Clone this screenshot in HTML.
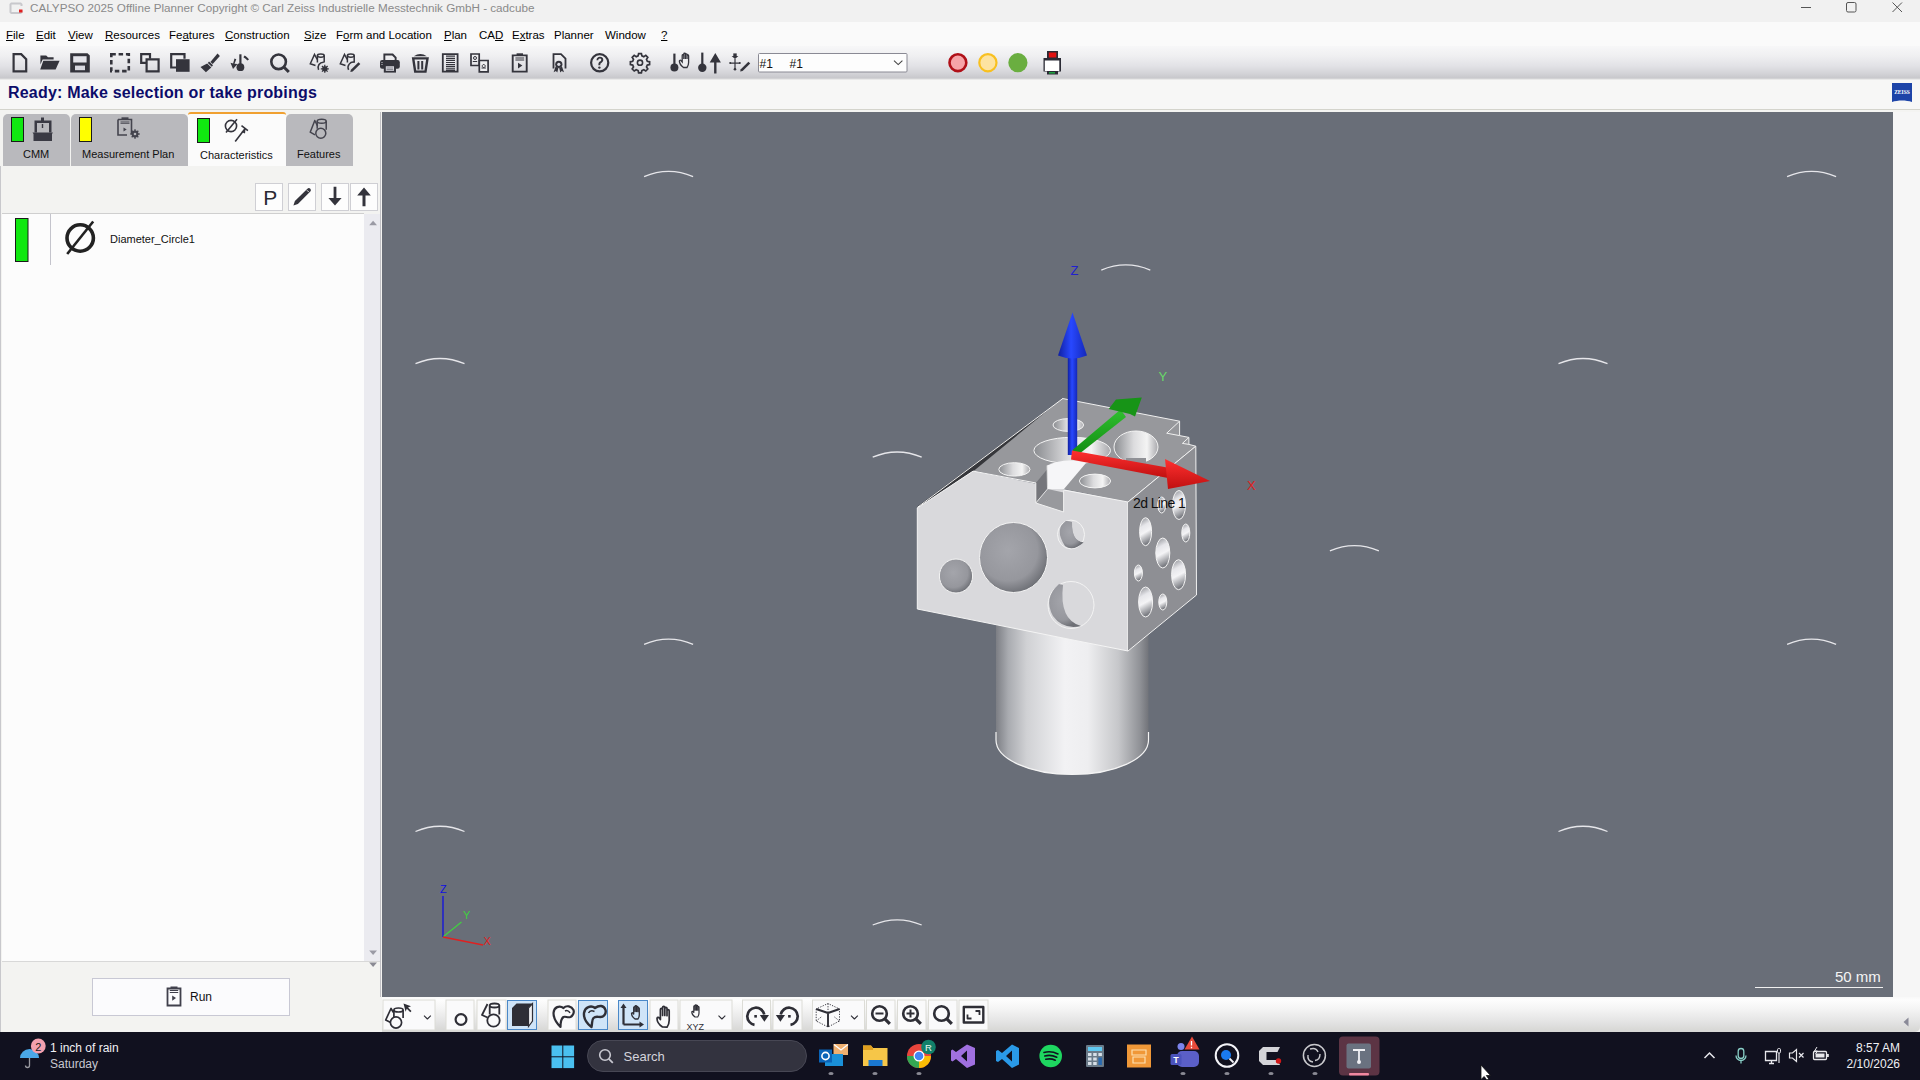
<!DOCTYPE html>
<html><head><meta charset="utf-8">
<style>
*{margin:0;padding:0;box-sizing:border-box}
html,body{width:1920px;height:1080px;overflow:hidden;background:#f4f4f2;font-family:"Liberation Sans",sans-serif}
.a{position:absolute}
.t{position:absolute;white-space:nowrap;line-height:1}
#title{left:0;top:0;width:1920px;height:22px;background:#f1f1f1}
#menu{left:0;top:22px;width:1920px;height:24px;background:#fafafa}
#tool{left:0;top:46px;width:1920px;height:34px;background:linear-gradient(#f7f7f8 0px,#efeff1 10px,#e2e2e6 20px,#d4d4d8 27px,#c8c8cc 32px,#dcdcdc 33px,#f6f6f6 34px)}
#status{left:0;top:80px;width:1920px;height:30px;background:#f7f7f6;border-bottom:1px solid #d4d4cc}
.mi{font-size:11.5px;color:#000;top:30px}
.mi u{text-decoration:underline;text-underline-offset:1px}
#left{left:0;top:110px;width:381px;height:922px;background:#f2f2f2}
#vp{left:382px;top:112px;width:1511px;height:885px;background:#6a6e75;overflow:hidden}
#right{left:1893px;top:110px;width:27px;height:922px;background:#f6f6f6}
#vtool{left:382px;top:997px;width:1538px;height:35px;background:#eeeeee}
#task{left:0;top:1032px;width:1920px;height:48px;background:#17172a}
.tab{position:absolute;top:114px;height:52px;background:#b9b9bd;border-radius:5px 5px 0 0}
.tl{font-size:11px;color:#111;top:149px}
.ico{position:absolute}
</style></head><body>
<div id="title" class="a"></div>
<div class="t" style="left:30px;top:2px;font-size:11.7px;color:#8a8a8a">CALYPSO 2025 Offline Planner Copyright © Carl Zeiss Industrielle Messtechnik GmbH - cadcube</div>

<div id="menu" class="a"></div>
<div class="t mi" style="left:6px"><u>F</u>ile</div>
<div class="t mi" style="left:36px"><u>E</u>dit</div>
<div class="t mi" style="left:68px"><u>V</u>iew</div>
<div class="t mi" style="left:105px"><u>R</u>esources</div>
<div class="t mi" style="left:169px">Fe<u>a</u>tures</div>
<div class="t mi" style="left:225px"><u>C</u>onstruction</div>
<div class="t mi" style="left:304px"><u>S</u>ize</div>
<div class="t mi" style="left:336px">F<u>o</u>rm and Location</div>
<div class="t mi" style="left:444px"><u>P</u>lan</div>
<div class="t mi" style="left:479px">CA<u>D</u></div>
<div class="t mi" style="left:512px">E<u>x</u>tras</div>
<div class="t mi" style="left:554px">Planner</div>
<div class="t mi" style="left:605px">Window</div>
<div class="t mi" style="left:661px"><u>?</u></div>

<div id="tool" class="a"></div>
<svg class="a" style="left:0;top:0" width="1100" height="82" viewBox="0 0 1100 82">
<g fill="none" stroke="#34343c" stroke-width="2.2" stroke-linejoin="miter">
<!-- 1 new doc -->
<path d="M13.6 54.1h7.6l5 5v12.3h-12.6z"/>
<!-- 3 save -->

<!-- 4 dashed -->
<path d="M111.3 54.3h17.5v16.8h-17.5z" stroke-width="2.6" stroke-dasharray="4.5 2.8"/>
<!-- 5 copy -->
<path d="M146 62.8h-4.8v-8.6h8.8v4.5" stroke-width="2.2"/>
<path d="M146.6 59.4h12v12h-12z" stroke-width="2.2"/>
<!-- 6 copy filled -->
<path d="M176 67.5h-4.8v-13.3h13.3v4.5" stroke-width="2.2"/>
<!-- 9 search -->
<circle cx="278.6" cy="61.8" r="7.3" stroke-width="2.6"/>
<path d="M283.8 67l5 5" stroke-width="3"/>
<!-- 10 features gear -->
<g stroke-width="1.5">
<path d="M317.2 59.5l-2.7-5l-4.2 9.2l5.2 1.8"/>
<ellipse cx="320.8" cy="55.6" rx="3.4" ry="1.6"/>
<path d="M317.4 55.6v7M324.2 55.6v7"/>
<path d="M318.6 69.8a5.3 5.3 0 0 1 5.2-7.6"/>
</g>
<g stroke-width="1.5">
<path d="M347.2 59.5l-2.7-5l-4.2 9.2l5.2 1.8"/>
<ellipse cx="350.8" cy="55.6" rx="3.4" ry="1.6"/>
<path d="M347.4 55.6v7M354.2 55.6v7"/>
<path d="M348.6 69.8a5.3 5.3 0 0 1 6-7.5"/>
</g>
<!-- 12 printer outline parts -->
<!-- 13 trash -->
<path d="M413.2 58.4h14.3l-2 13.2h-10.3z" stroke-width="2.4"/>
<path d="M418.4 61v8.6M422.2 61v8.6" stroke-width="2"/>
<!-- 14 doc lines -->
<path d="M442.8 54.2h14.8v17.5h-14.8z" stroke-width="1.8"/>
<!-- 15 two docs -->
<path d="M471 54h8.2v11.5h-8.2z" stroke-width="1.7"/>
<path d="M479.3 60.5h8.8v11.4h-8.8z" stroke-width="1.7" fill="#eeeef0"/><circle cx="475" cy="58" r="1.5" stroke-width="1"/><path d="M472.8 61.5h4.4M483.7 64.5a1.5 1.5 0 1 0 .01 0M481.5 68h4.4" stroke-width="1"/>
<!-- 16 clipboard -->
<path d="M512.7 55.4h14v16.2h-14z" stroke-width="1.9"/>
<!-- 17 certificate -->
<path d="M553.5 68.5v-14.3h7.5l4.5 4.5v9.8" stroke-width="1.8"/>
<!-- 18 help -->
<circle cx="599.7" cy="62.8" r="8.6" stroke-width="2.2"/>
<!-- 19 gear -->
<circle cx="640" cy="62.7" r="2.6" stroke-width="1.6"/><path d="M638.6 53.6h2.8l.5 2.3l1.9.8l2-1.3l2 2l-1.3 2l.8 1.9l2.3.5v2.8l-2.3.5l-.8 1.9l1.3 2l-2 2l-2-1.3l-1.9.8l-.5 2.3h-2.8l-.5-2.3l-1.9-.8l-2 1.3l-2-2l1.3-2l-.8-1.9l-2.3-.5v-2.8l2.3-.5l.8-1.9l-1.3-2l2-2l2 1.3l1.9-.8z" stroke-width="1.7"/>
<!-- 20 hand outline -->
<path transform="translate(1,-3)" d="M682.5 70.5c-2.2-1.6-4-4.2-4.1-6.4c0-.9 1-1.2 1.6-.5l1.2 1.4v-6.5c0-1.1 1.6-1.1 1.6 0v3.5v-5c0-1.1 1.6-1.1 1.6 0v5v-4.4c0-1.1 1.6-1.1 1.6 0v4.4v-3.2c0-1.1 1.6-1.1 1.6 0v6.8c0 2.1-.6 3.6-1.6 4.9z" stroke-width="1.3" fill="#eeeef0"/>
</g>
<g fill="#34343c" stroke="none">
<!-- 2 open folder -->
<path d="M40.4 55.6h5.8l1.8 1.6h5.6v2.4h-11l-2.2 5z"/>
<path d="M43.3 60.8h16.3l-4 8.6h-15.4z"/>
<!-- 3 save inner -->
<path d="M70.2 53.2h17.3l2.3 2.3v17h-19.6z"/>
<!-- 6 filled square -->
<path d="M176 59.2h13.6v12.6h-13.6z"/>
<!-- 7 brush -->
<path d="M217.5 53.6l2.4 2.3l-7.2 8.2l-2.3-2.2z"/>
<path d="M209 61.5l4 3.8l-1.2 1.4l-4-3.8z"/>
<path d="M207.2 63.6l4.1 3.9l-5.4 4.8l-5.4-5.2z"/>
<!-- 8 probe arrow -->
<path d="M239.3 54.3h2.2v10.5h-2.2z"/>
<circle cx="240.4" cy="67.2" r="3.9"/>
<path d="M234.5 58.5l1.8 0.8l-1.8 4.5l3 .3l-4.5 4.9l-2.5-6.3l2.6.8z"/>
<path d="M243.4 57.2l1.2-1.8c1.7.9 3.2 2.3 4.4 4l-1.6 1.2c-1.1-1.4-2.4-2.6-4-3.4z"/>
<!-- 10 gear small -->
<circle cx="324.8" cy="68.8" r="2.6"/><path d="M324.8 64.8v8M320.8 68.8h8M322 66l5.6 5.6M327.6 66l-5.6 5.6" stroke="#34343c" stroke-width="1.3"/>
<!-- 11 pencil -->
<path d="M358.5 62.3l1.8 1.8l-7.6 7.3l-2.4.6l.6-2.3z"/>
<!-- 12 printer -->
<path d="M413.8 56.3q6.5-4.6 13 0z"/>
<path d="M383.4 53.6h9.6l3.6 3.6v3.6h-1.9v-2.8l-2.6-2.6h-6.8v5.4h-1.9z"/>
<rect x="380" y="60" width="19.8" height="8.8" rx="2.2"/>
<path d="M383.8 64.6h12.2v8h-12.2z"/>
<!-- 14 doc lines -->
<path d="M446 55.6h9v1.2h-9zM446 57.7h9v1.2h-9zM446 59.8h9v1.2h-9zM446 61.9h9v1.2h-9zM446 64h9v1.2h-9zM446 66.1h9v1.2h-9zM446 68.2h9v1.2h-9zM446 70.1h9v.9h-9z"/>
<!-- 16 clipboard play -->
<path d="M516.6 53.3h6.4v2.4h-6.4z"/>
<path d="M515.4 57.4h8.8v1.2h-8.8zM515.4 59.4h8.8v1.2h-8.8z"/>
<path d="M518 62.8l4.4 2.8l-4.4 2.8z"/>
<!-- 17 certificate seal -->
<circle cx="558.8" cy="64.3" r="3.6"/>
<path d="M555.6 66.5l-2 5.7l2.3-1.3l1.4 1.7l1.1-4.6zM562 66.5l2 5.7l-2.3-1.3l-1.4 1.7l-1.1-4.6z"/>
<!-- 18 help ? -->
<path d="M596.5 60.3c0-2.3 1.5-3.5 3.4-3.5c2 0 3.4 1.3 3.4 3c0 1.5-.8 2.3-2 3.1c-.8.5-1 .9-1 1.8v.6h-1.9v-.8c0-1.4.4-2.1 1.5-2.9c.9-.6 1.4-1 1.4-1.8c0-.8-.6-1.4-1.5-1.4c-1 0-1.5.7-1.5 1.9z"/>
<circle cx="599.4" cy="67.6" r="1.2"/>
<!-- 20 probe -->
<path d="M673.3 53.6h2.2v11.5h-2.2z"/>
<circle cx="674.4" cy="67.6" r="4"/>
<!-- 21 probe + up arrow -->
<path d="M701.2 52.6h2.2v12.5h-2.2z"/>
<circle cx="702.3" cy="67.8" r="4.2"/>
<path d="M715.3 53l5.6 9.4h-4.4v11.2h-2.4v-11.2h-4.4z"/>
<!-- 22 tree + pencil -->
<path d="M733.3 53.4h3.4v2.6h-3.4z"/><path d="M731.6 56h6.8l-3.4 3z"/>
<path d="M734.4 59h1.2v10.2h-1.2zM730 62.6h10v1.1h-10z"/>
<circle cx="735" cy="69.2" r="1.3"/><circle cx="730.2" cy="63.1" r="1"/><circle cx="739.8" cy="63.1" r="1"/>
<path d="M748.4 61.8l1.8 1.8l-7.6 7.4l-2.5.6l.7-2.4z"/>
</g>
<!-- save windows light -->
<path d="M73.2 56.2h13.4v6.3h-13.4z" fill="#e4e4ea"/>
<path d="M75 65.6h10v4.6h-10z" fill="#d8d8e0"/>
<!-- printer inner lines -->
<path d="M385.8 66.3h8.2v4.5h-8.2z" fill="#e2e2e8"/><path d="M386.5 68h6.8M386.5 69.6h6.8" stroke="#6a6a74" stroke-width="0.8"/><path d="M381.2 62.5h1.6M381.2 64.5h1.6" stroke="#b0b0b8" stroke-width="0.8"/>
<!-- certificate inner -->
<circle cx="558.8" cy="64.3" r="1.6" fill="#dedee6"/>
<!-- combo -->
<rect x="758.5" y="53.5" width="148.5" height="18.5" rx="1" fill="#fdfdfd" stroke="#8a8a94" stroke-width="1"/>
<text x="759.5" y="67.6" font-family="Liberation Sans" font-size="12" fill="#111">#1</text>
<text x="789.5" y="67.6" font-family="Liberation Sans" font-size="12" fill="#111">#1</text>
<path d="M894 60.6l4.2 4l4.2-4" fill="none" stroke="#444" stroke-width="1.1"/>
<!-- traffic lights -->
<circle cx="957.9" cy="62.7" r="8.4" fill="#f6a4a8" stroke="#b01018" stroke-width="2.6"/>
<circle cx="987.9" cy="62.7" r="8.6" fill="#fde3a0" stroke="#f8c020" stroke-width="2.2"/>
<circle cx="1017.9" cy="62.7" r="9.6" fill="#6aae40"/>
<!-- device -->
<path d="M1047 51h11v7h3v13.5h-3v3h-11v-3h-3.5v-13.5h3.5z" fill="#2a2a34"/>
<path d="M1048.8 52.5h7.5v5h-7.5z" fill="#e01010"/>
<path d="M1044.8 60.5h14.5v10.5h-14.5z" fill="#ffffff"/>
<path d="M1049 72h6v1.6h-6z" fill="#20a040"/>
</svg>

<!-- window controls -->
<svg class="a" style="left:1780px;top:0" width="140" height="22" viewBox="1780 0 140 22">
<path d="M1801 7.5h10" stroke="#555" stroke-width="1"/>
<rect x="1846.5" y="2.5" width="9.5" height="9.5" rx="1.5" fill="none" stroke="#555" stroke-width="1"/>
<path d="M1892.5 2.5l9.5 9.5M1902 2.5l-9.5 9.5" stroke="#555" stroke-width="1"/>
</svg>
<!-- title icon -->
<svg class="a" style="left:6px;top:1px" width="20" height="16" viewBox="6 1 20 16">
<path d="M11 2.5h10l1.5 1.5v2h-2v-1.5h-9v7.5h9v-1.5h2v2l-1.5 1.5h-10l-1.5-1.5v-8.5z" fill="#c8c8cc"/>
<path d="M19 9.5h3.5v3h-3.5z" fill="#e02020"/>
</svg>


<div id="status" class="a"></div>
<!-- zeiss logo -->
<svg class="a" style="left:1890px;top:82px" width="24" height="24" viewBox="1890 82 24 24">
<path d="M1892 83h20v19c-6-2-14-2-20 0z" fill="#1d44a8"/>
<text x="1902" y="93.5" font-family="Liberation Serif" font-size="5.5" font-weight="bold" fill="#fff" text-anchor="middle">ZEISS</text>
</svg>
<div class="t" style="left:8px;top:85px;font-size:16px;font-weight:bold;color:#0c0c6a;letter-spacing:0.2px">Ready: Make selection or take probings</div>

<div class="a" style="left:0;top:110px;width:382px;height:922px;background:#f3f3f1"></div>
<div class="a" style="left:0;top:166px;width:1px;height:866px;background:#c8c8cc"></div>
<div class="a" style="left:380px;top:112px;width:1px;height:885px;background:#c0c0c4"></div>
<div class="tab" style="left:3px;width:67px"></div>
<div class="tab" style="left:71px;width:117px"></div>
<div class="a" style="left:188px;top:112px;width:98px;height:54px;background:#fbfbfb;border-radius:3px 3px 0 0;border-top:2.5px solid #f0a030"></div>
<div class="tab" style="left:286px;width:67px"></div>
<div class="a" style="left:2px;top:213px;width:362px;height:748px;background:#fcfcfc;border-top:1px solid #cfcfcf"></div>
<div class="a" style="left:364px;top:214px;width:16px;height:747px;background:#ebebf0"></div>
<div class="a" style="left:2px;top:961px;width:378px;height:1px;background:#d8d8d8"></div>
<div class="t tl" style="left:23px">CMM</div>
<div class="t tl" style="left:82px">Measurement Plan</div>
<div class="t tl" style="left:200px;top:150px">Characteristics</div>
<div class="t tl" style="left:297px">Features</div>
<div class="t" style="left:110px;top:234px;font-size:11px;color:#111">Diameter_Circle1</div>
<svg class="a" style="left:0;top:110px" width="382" height="922" viewBox="0 110 382 922">
<rect x="11.5" y="117.5" width="12" height="24" fill="#10e810" stroke="#1a1a1a" stroke-width="1"/>
<rect x="79.5" y="117.5" width="12" height="24" fill="#ffff00" stroke="#1a1a1a" stroke-width="1"/>
<rect x="197.5" y="118.5" width="12" height="24" fill="#10e810" stroke="#1a1a1a" stroke-width="1"/>
<rect x="15.5" y="218.5" width="12.5" height="43" fill="#10e810" stroke="#1a1a1a" stroke-width="1"/>
<path d="M50.5 214v51" stroke="#c4c4cc" stroke-width="1"/>
<!-- CMM icon -->
<g fill="#3a3a44">
<path d="M41 117.5h3v4h-3z"/>
<path d="M34.5 120.5h17v12h-2.5v-9.5h-12v9.5h-2.5z"/>
<path d="M41.8 124h1.4v4h-1.4z"/>
<path d="M32.5 132.5h20.5l-1 1.5v7h-18.5v-7z"/>
</g>
<!-- MP icon: clipboard + gear -->
<g fill="none" stroke="#44444e" stroke-width="1.6">
<path d="M118 119.5h13.5v14.5M118 119.5v15.5h9"/>
</g>
<g fill="#44444e">
<path d="M121.5 117.3h7v1.8h-7z"/>
<path d="M120.5 121.5h9v.9h-9zM120.5 123.2h9v.9h-9z"/>
<path d="M123.5 127.5l3.2 2l-3.2 2z"/>
<circle cx="135" cy="134" r="3.4"/>
<path d="M135 129.3v9.4M130.3 134h9.4M131.7 130.7l6.6 6.6M138.3 130.7l-6.6 6.6" stroke="#44444e" stroke-width="1.4"/>
</g>
<circle cx="135" cy="134" r="1.3" fill="#b9b9bd"/>
<!-- Characteristics icon -->
<g fill="none" stroke="#34343c" stroke-width="1.6">
<circle cx="231" cy="126" r="5.6"/>
<path d="M226 132.5l11-13.2"/>
<path d="M235.2 141.4l9.6-12.5M241.5 125.6l6.4 5"/>
</g>
<path d="M241.5 132l4-3.3l-.5 4.8z" fill="#34343c"/>
<!-- Features icon (tab) -->
<g fill="none" stroke="#44444e" stroke-width="1.5">
<path d="M317.5 126L314.8 120.5L310.2 132.2L315 134.8" stroke-linejoin="round"/>
<ellipse cx="321.7" cy="121.2" rx="4.5" ry="2"/>
<path d="M317.2 121.2v7.5M326.2 121.2v8.5"/>
<circle cx="320.8" cy="133.2" r="5"/>
</g>
<!-- buttons -->
<g fill="#fdfdfd" stroke="#cfcfd4" stroke-width="1">
<rect x="255.5" y="183.5" width="27" height="27"/>
<rect x="288.5" y="183.5" width="27" height="27"/>
<rect x="321.5" y="183.5" width="27" height="27"/>
<rect x="350.5" y="183.5" width="27" height="27"/>
</g>
<text x="263.2" y="205" font-family="Liberation Sans" font-size="21" fill="#2a2a34">P</text>
<path d="M293.4 205.6l1.5-4.6l12.5-12.3c.8-.8 2.1-.8 2.9 0c.8.8.8 2.1 0 2.9l-12.4 12.5z" fill="#34343c"/>
<path d="M307 190.3l1.6 1.6" stroke="#fdfdfd" stroke-width="1"/>
<path d="M333.6 186.8h2.8v11.2h5.2l-6.6 7.6l-6.6-7.6h5.2z" fill="#34343c"/>
<path d="M364 187.5l6.8 8h-5.3v10.8h-3v-10.8h-5.3z" fill="#34343c"/>
<!-- ⌀ -->
<circle cx="80.2" cy="238" r="13.2" fill="none" stroke="#222" stroke-width="3.6"/>
<path d="M67.2 254l26-32.5" stroke="#222" stroke-width="2.6"/>
<!-- scroll arrows -->
<path d="M369.2 225.3l3.9-4.6l3.9 4.6z" fill="#9a9aa4"/>
<path d="M369.2 950.5l3.9 4.6l3.9-4.6z" fill="#9a9aa4"/>
<path d="M369.2 962.5l3.9 4.6l3.9-4.6z" fill="#8a8a94"/>
<!-- run button -->
<rect x="92.5" y="978.5" width="197" height="37" fill="#fbfbfd" stroke="#c8c8d4" stroke-width="1"/>
<path d="M167.5 988.5h13v17h-13z" fill="none" stroke="#40404c" stroke-width="1.8"/>
<path d="M170.5 986.6h7v1.8h-7zM169.8 990h8.4v1h-8.4zM169.8 992h8.4v1h-8.4z" fill="#40404c"/>
<path d="M172.2 995.5l3.8 2.6l-3.8 2.6z" fill="#40404c"/>
</svg>
<div class="t" style="left:190px;top:991px;font-size:12px;color:#111">Run</div>

<svg class="a" style="left:382px;top:112px" width="1511" height="885" viewBox="382 112 1511 885">
<defs>
<linearGradient id="cyl" x1="996" x2="1149" y1="0" y2="0" gradientUnits="userSpaceOnUse">
<stop offset="0" stop-color="#7c7e84"/>
<stop offset="0.08" stop-color="#a9abb0"/>
<stop offset="0.2" stop-color="#d0d1d4"/>
<stop offset="0.45" stop-color="#f2f2f4"/>
<stop offset="0.6" stop-color="#eeeef0"/>
<stop offset="0.8" stop-color="#c6c7ca"/>
<stop offset="0.94" stop-color="#909297"/>
<stop offset="1" stop-color="#707278"/>
</linearGradient>
<linearGradient id="hole" x1="0" x2="1" y1="0" y2="0">
<stop offset="0" stop-color="#8a8c90"/>
<stop offset="0.45" stop-color="#dcdcde"/>
<stop offset="0.75" stop-color="#f4f4f4"/>
<stop offset="1" stop-color="#a8a8ac"/>
</linearGradient>
<radialGradient id="holeF" cx="0.42" cy="0.4" r="0.62">
<stop offset="0" stop-color="#a4a5ab"/>
<stop offset="0.7" stop-color="#96979d"/>
<stop offset="1" stop-color="#6e7076"/>
</radialGradient>
<linearGradient id="holeR" x1="0" x2="0.25" y1="0" y2="1">
<stop offset="0" stop-color="#85878d"/>
<stop offset="0.35" stop-color="#e6e6ea"/>
<stop offset="0.6" stop-color="#f4f4f6"/>
<stop offset="1" stop-color="#7c7e84"/>
</linearGradient>
<linearGradient id="zax" x1="0" x2="1" y1="0" y2="0">
<stop offset="0" stop-color="#1020a0"/><stop offset="0.45" stop-color="#2848ff"/><stop offset="1" stop-color="#1428b8"/>
</linearGradient>
<linearGradient id="yax" x1="0" x2="0" y1="0" y2="1">
<stop offset="0" stop-color="#30c030"/><stop offset="1" stop-color="#108a10"/>
</linearGradient>
<linearGradient id="xax" x1="0" x2="0" y1="0" y2="1">
<stop offset="0" stop-color="#ff3030"/><stop offset="1" stop-color="#c01010"/>
</linearGradient>
</defs>
<rect x="382" y="112" width="1511" height="885" fill="#696e78"/>
<!-- faint arcs -->
<g fill="none" stroke="#e6e6ea" stroke-width="1.3">
<path d="M644.1 176.6Q668.6 166.2 693.1 176.6"/>
<path d="M1787.1 176.6Q1811.6 166.2 1836.1 176.6"/>
<path d="M1101.3 270.1Q1125.8 259.8 1150.3 270.1"/>
<path d="M415.5 363.7Q440.0 353.3 464.5 363.7"/>
<path d="M1558.5 363.7Q1583.0 353.3 1607.5 363.7"/>
<path d="M872.7 457.2Q897.2 446.8 921.7 457.2"/>
<path d="M1329.9 550.8Q1354.4 540.4 1378.9 550.8"/>
<path d="M644.1 644.4Q668.6 633.9 693.1 644.4"/>
<path d="M1787.1 644.4Q1811.6 633.9 1836.1 644.4"/>
<path d="M415.5 831.5Q440.0 821.0 464.5 831.5"/>
<path d="M1558.5 831.5Q1583.0 821.0 1607.5 831.5"/>
<path d="M872.7 925.0Q897.2 914.6 921.7 925.0"/>
</g>
<!-- cylinder -->
<path d="M996 600h152.5v140a76.2 34.5 0 0 1 -152.5 0z" fill="url(#cyl)"/>
<path d="M996 732v8a76.2 34.5 0 0 0 152.5 0v-8" fill="none" stroke="#f4f4f4" stroke-width="1.2"/>
<!-- block top face -->
<path d="M1062.5 398.5L1179.6 421.2L1179.6 435.6L1188.9 437.4L1188.9 444.4L1195.8 446.2L1128 502L976 471L917 507.5z" fill="#97989c"/>
<!-- notch at right back -->
<path d="M1179.6 421.2V435.6L1188.9 437.4V444.4L1195.8 446.2M1179.6 421.2L1166.7 433.2L1179.6 435.6M1188.9 437.4L1182.4 443.4L1188.9 444.4" fill="none" stroke="#f0f0f0" stroke-width="1"/>
<!-- chamfer dark line -->
<path d="M1063 398.4L917.3 506.5L917.3 508L973 471.5L1056 403.5z" fill="#36373b"/>
<path d="M1063 398.4L917.2 507.5" stroke="#f0f0f0" stroke-width="1"/>
<path d="M1062.5 398.5L1179.6 421.2M1195.8 446.2L1128 502" stroke="#f0f0f0" stroke-width="1"/>
<!-- front face -->
<path d="M917.3 508L973.1 471.1L1128 502L1128 651L917.3 609z" fill="#d9d9dc"/>
<path d="M917.3 609L917.3 508L973.1 471.1L1036 483M1063.5 490L1128 502L1128 651L917.3 609" fill="none" stroke="#f4f4f4" stroke-width="1"/>
<!-- right face -->
<path d="M1128 502L1195.8 446.2L1196.5 595L1128 651z" fill="#8e8f94"/>
<path d="M1128 502L1195.8 446.2L1196.5 595L1128 651" fill="none" stroke="#f0f0f0" stroke-width="1"/>
<!-- slot -->
<path d="M1035.8 483L1047.5 469L1047.5 489L1035.8 503z" fill="#75767b"/>
<path d="M1035.8 503L1047.5 489L1063.6 492.5L1063.6 512z" fill="#98999d"/>
<path d="M1035.8 483v20l27.8 9v-21.5" fill="none" stroke="#f0f0f0" stroke-width="1"/>
<path d="M1035.8 503L1047.5 489" stroke="#f0f0f0" stroke-width="0.8"/>
<!-- top holes -->
<ellipse cx="1072.2" cy="450.5" rx="38.3" ry="13.2" fill="url(#hole)" stroke="#f4f4f4" stroke-width="1"/>
<path d="M1047 465.5Q1066 457 1086 463L1064 489L1047.5 489z" fill="#f6f6f8"/>
<path d="M1047 465.5L1047.5 489" stroke="#dcdcdc" stroke-width="0.8"/>
<ellipse cx="1068.3" cy="425" rx="15.3" ry="6.4" fill="url(#hole)" stroke="#f4f4f4" stroke-width="1"/>
<ellipse cx="1014.4" cy="469.4" rx="15.6" ry="6.7" fill="url(#hole)" stroke="#f4f4f4" stroke-width="1"/>
<ellipse cx="1095" cy="481" rx="15.6" ry="6.9" fill="url(#hole)" stroke="#f4f4f4" stroke-width="1"/>
<ellipse cx="1136" cy="447" rx="22" ry="16" fill="url(#hole)" stroke="#f4f4f4" stroke-width="1"/>
<path d="M1126 458h20v12h-20z" fill="#909196"/>
<!-- front holes -->
<ellipse cx="1013.5" cy="557.5" rx="34" ry="35" fill="url(#holeF)" stroke="#f4f4f4" stroke-width="1"/>
<ellipse cx="956" cy="576" rx="16.6" ry="17" fill="url(#holeF)" stroke="#f4f4f4" stroke-width="1"/>
<ellipse cx="1071" cy="534.5" rx="13.5" ry="14.4" fill="#d9d9dc" stroke="#f4f4f4" stroke-width="1"/>
<path d="M1066 521a13.5 14.4 0 0 0 17.5 21.5q-12 -1 -11.5 -20.5z" fill="url(#holeF)"/><path d="M1066 521q-12 8 -1 25q8 6 18.5 -3.5q-12-1-11.5-20.5z" fill="url(#holeF)"/>
<ellipse cx="1071" cy="605" rx="23" ry="23.5" fill="#d9d9dc" stroke="#f4f4f4" stroke-width="1"/>
<path d="M1059 584q-16 14 -6 32q10 14 28 10q-22-6-18-41z" fill="url(#holeF)"/>
<!-- right face holes -->
<g fill="url(#holeR)" stroke="#f4f4f4" stroke-width="1">
<ellipse cx="1145.6" cy="531.7" rx="6" ry="14"/>
<ellipse cx="1185.8" cy="533" rx="4" ry="9"/>
<ellipse cx="1162.8" cy="553" rx="7" ry="15"/>
<ellipse cx="1178.6" cy="574.7" rx="7" ry="15"/>
<ellipse cx="1138.4" cy="573" rx="4" ry="8"/>
<ellipse cx="1145.6" cy="602" rx="7" ry="15"/>
<ellipse cx="1162.8" cy="602" rx="4" ry="8"/>
<ellipse cx="1179" cy="505" rx="6.5" ry="14.5"/>
<ellipse cx="1161.7" cy="505" rx="4" ry="8"/>
</g>
<!-- axes -->
<path d="M1067.8 355h9.4v100h-9.4z" fill="url(#zax)"/>
<path d="M1072.5 312.5L1058 355.5q14.5 6 29 0z" fill="url(#zax)"/>
<path d="M1072.5 450L1076.5 456L1126 417L1120.5 409.5z" fill="url(#yax)"/>
<path d="M1108.7 409L1116 399.5L1141.8 397.6L1135 416.5L1130 414z" fill="#179417"/>
<path d="M1072 450.5L1071 459.5L1168 478L1170 468z" fill="url(#xax)"/>
<path d="M1210 481L1165 459L1168 489z" fill="url(#xax)"/>
<text x="1070.5" y="275" font-family="Liberation Sans" font-size="13" fill="#2020d0">Z</text>
<text x="1158.5" y="381" font-family="Liberation Sans" font-size="13" fill="#68d868">Y</text>
<text x="1247" y="489.5" font-family="Liberation Sans" font-size="13" fill="#e02020">X</text>
<text x="1133" y="507.5" font-family="Liberation Sans" font-size="14" letter-spacing="-0.6" fill="#101010">2d Line 1</text>
<!-- mini axes -->
<path d="M443 896v41" stroke="#1010e0" stroke-width="1.3"/>
<path d="M443.5 936.5l18-14.5" stroke="#40d040" stroke-width="1.2"/>
<path d="M443 937l40 8" stroke="#e02020" stroke-width="1.3"/>
<text x="440" y="893" font-family="Liberation Sans" font-size="11" fill="#1010e0">Z</text>
<text x="463" y="919" font-family="Liberation Sans" font-size="11" fill="#40d040">Y</text>
<text x="483.5" y="945" font-family="Liberation Sans" font-size="11" fill="#e02020">X</text>
<!-- scale -->
<text x="1835" y="982" font-family="Liberation Sans" font-size="15" fill="#f4f4f4">50 mm</text>
<path d="M1755 987.5h128" stroke="#f0f0f0" stroke-width="1.2"/>
</svg>

<div class="a" style="left:382px;top:997px;width:1538px;height:35px;background:linear-gradient(#f8f8f8 0px,#fdfdfd 3px,#f4f4f4 12px,#e2e2e2 26px,#d8d8d6 33px,#d8d8d6 35px);border-radius:0 0 5px 0"></div>
<div class="a" style="left:1893px;top:112px;width:27px;height:885px;background:#f6f6f6"></div>

<svg class="a" style="left:382px;top:997px" width="640" height="35" viewBox="382 997 640 35">
<g fill="#fafafb" stroke="#dcdcd6" stroke-width="1">
<rect x="383" y="1000" width="52" height="30"/>
<rect x="446" y="1000" width="28" height="30"/>
<rect x="477" y="1000" width="29" height="30"/>
<rect x="548" y="1000" width="28" height="30"/>
<rect x="650" y="1000" width="28" height="30"/>
<rect x="680" y="1000" width="52" height="30"/>
<rect x="742.5" y="1000" width="28" height="30"/>
<rect x="773" y="1000" width="29" height="30"/>
<rect x="812.5" y="1000" width="52" height="30"/>
<rect x="866.5" y="1000" width="28.5" height="30"/>
<rect x="897.5" y="1000" width="28.5" height="30"/>
<rect x="928.5" y="1000" width="28.5" height="30"/>
<rect x="959" y="1000" width="29" height="30"/>
</g>
<g fill="#cfe4f8" stroke="#4a88c8" stroke-width="1">
<rect x="507.5" y="1000.5" width="29" height="29"/>
<rect x="578.5" y="1000.5" width="29" height="29"/>
<rect x="618.5" y="1000.5" width="29" height="29"/>
</g>
<g fill="none" stroke="#2e2e36" stroke-width="1.5" stroke-linejoin="round">
<!-- b1 shapes + cursor -->
<path d="M393.5 1012.5l-2.5-4l-5.3 11.5l5 2.5" stroke-width="1.7"/>
<ellipse cx="398.5" cy="1010" rx="4.6" ry="2" stroke-width="1.7"/>
<path d="M393.9 1010v7M403.1 1010v8" stroke-width="1.7"/>
<circle cx="396" cy="1022.5" r="5.6" stroke-width="1.7"/>
<path d="M424 1015.6l3.4 3.4l3.4-3.4" stroke-width="1.1"/>
<!-- b2 circle -->
<circle cx="461" cy="1019.5" r="5.4" stroke-width="2.2"/>
<!-- b3 shapes -->
<path d="M487.5 1004l-5.5 11l5.5 2.5" stroke-width="1.8"/>
<ellipse cx="494.5" cy="1005.5" rx="4.8" ry="2" stroke-width="1.8"/>
<path d="M489.7 1005.5v9M499.3 1005.5v9" stroke-width="1.8"/>
<circle cx="493.5" cy="1020.5" r="6.2" stroke-width="1.8"/>
<!-- b5 blob -->
<path d="M553.5 1013c.5-6 6-8 10-5c3-3 8-2 10 2c1 3-1 6-3 7c-3 1-5-1-7 0c-3 2-3 6-3 10c-3-3-7-8-7-14z" stroke-width="2.2"/>
<path d="M565 1011c2-1 4 0 5 2" stroke-width="1.5"/>
<!-- b6 blob outline -->
<path d="M584 1013c1-6 7-8 11-5c4-3 9-3 10.5 2c1 4-2 7-5 7c-3 0-5-1-7 1c-2 2-1 5-2 9c-4-3-8-8-7.5-14z" stroke-width="2.4"/>
<path d="M588.5 1013c1-2 3-3 6-1.5" stroke-width="1.4"/>
<!-- b7 axes + hand -->
<path d="M623.5 1024.5v-18M623.5 1024.5h17" stroke-width="2.2"/>
<!-- b8 hand -->
<path d="M662.5 1027c-3-2-5.5-5.5-5.5-8.5c0-1.2 1.4-1.6 2.2-.6l1.2 1.6v-10c0-1.4 2.2-1.4 2.2 0v6v-8c0-1.4 2.2-1.4 2.2 0v8v-7c0-1.4 2.2-1.4 2.2 0v7.2v-5c0-1.4 2.2-1.4 2.2 0v9.5c0 3-.8 5-2.2 7z" stroke-width="1.7"/>
<!-- b7 small hand -->
<path d="M635 1019c-2-1.5-3.5-3.5-3.5-5.5c0-.8.9-1 1.4-.4l.8 1v-6.5c0-.9 1.4-.9 1.4 0v4v-5.2c0-.9 1.4-.9 1.4 0v5.2v-4.5c0-.9 1.4-.9 1.4 0v4.6v-3.2c0-.9 1.4-.9 1.4 0v6.2c0 2-.5 3.2-1.4 4.3z" stroke-width="1.3"/>
<!-- b9 xyz hand -->
<path d="M695 1017c-2-1.3-3.2-3.2-3.2-5c0-.7.8-.9 1.3-.4l.7.9v-6c0-.8 1.3-.8 1.3 0v3.7v-4.8c0-.8 1.3-.8 1.3 0v4.8v-4.2c0-.8 1.3-.8 1.3 0v4.2v-3c0-.8 1.3-.8 1.3 0v5.8c0 1.8-.5 3-1.3 4z" stroke-width="1.2"/>
<path d="M718.5 1015.6l3.4 3.4l3.4-3.4" stroke-width="1.1"/>
<!-- b10 rotate cw -->
<path d="M754.5 1024.8A8.6 8.6 0 1 1 764.3 1014.5" stroke-width="2.7"/>
<!-- b11 rotate ccw -->
<path d="M790.5 1024.8A8.6 8.6 0 1 0 780.7 1014.5" stroke-width="2.7"/>
<!-- b12 cube -->
<path d="M828 1013v14M828 1013l-11.8-4M828 1013l11.5-4" stroke-width="1.9"/>
<path d="M816.2 1009v12l11.8 6l11.5-6v-12l-11.5-5.5z M828 1003.5v9.5M816.2 1021l5-4M839.5 1021l-5-4" stroke-width="0.9" stroke-dasharray="1.3 1.3"/>
<path d="M851 1015.6l3.4 3.4l3.4-3.4" stroke-width="1.1"/>
<!-- zoom out/in/zoom -->
<circle cx="879.5" cy="1013.5" r="7.3" stroke-width="2.6"/><path d="M884.8 1018.8l5 5" stroke-width="3.2"/><path d="M875.5 1013.5h8" stroke-width="2"/>
<circle cx="910.5" cy="1013.5" r="7.3" stroke-width="2.6"/><path d="M915.8 1018.8l5 5" stroke-width="3.2"/><path d="M906.5 1013.5h8M910.5 1009.5v8" stroke-width="2"/>
<circle cx="941.5" cy="1013.5" r="7.3" stroke-width="2.6"/><path d="M946.8 1018.8l5 5" stroke-width="3.2"/>
<!-- fit -->
<rect x="963.8" y="1007" width="19.5" height="15.5" stroke-width="2.4"/>
<path d="M967.5 1014.5v4h4M979.5 1015v-4h-4" stroke-width="1.8"/>
</g>
<g fill="#2e2e36">
<path d="M403.5 1003.5l7.5 2.8l-3 1.2l3.5 3.5l-1.2 1.2l-3.5-3.5l-1.2 3z"/>
<path d="M528.5 1005l4 -2.5v17.5l-4 4.5z" fill="#f4f4f6"/>
<path d="M512 1008l4.5-4.5h16l-4.5 4.5zM512 1008h16.5v18h-16.5z"/>
<path d="M528.5 1008l4-4.5v17.5l-4 5.5z" fill="#f0f0f2" stroke="#2e2e36" stroke-width="1.2"/>
<path d="M623.5 1003.5l3 4.5h-6z"/><path d="M644 1024.5l-4.5 3v-6z"/>
<path d="M759.8 1015h9.2l-4.6 6.8z"/><rect x="754.3" y="1015" width="2.6" height="2.6"/>
<path d="M775.8 1015h9.2l-4.6 6.8z"/><rect x="788.1" y="1015" width="2.6" height="2.6"/>
</g>
<text x="686.5" y="1029.5" font-family="Liberation Sans" font-size="9" fill="#2e2e36">XYZ</text>
</svg>
<svg class="a" style="left:1895px;top:1010px" width="20" height="20" viewBox="1895 1010 20 20">
<path d="M1908.5 1017.5v9l-5-4.5z" fill="#8a8a98"/>
</svg>

<div class="a" style="left:0;top:1032px;width:1920px;height:48px;background:#11111f"></div>
<svg class="a" style="left:0;top:1032px" width="1920" height="48" viewBox="0 1032 1920 48">
<!-- weather umbrella -->
<path d="M20 1058a9.5 9 0 0 1 19 0z" fill="#4aa8e8"/>
<path d="M29.5 1058v7.5a2 2 0 0 1-4 0" fill="none" stroke="#9a9aa0" stroke-width="1.3"/>
<circle cx="38.3" cy="1046" r="7.4" fill="#f4a0ae"/>
<text x="38.3" y="1050.5" font-family="Liberation Sans" font-size="11" fill="#1a1a1a" text-anchor="middle">2</text>
<!-- windows logo -->
<g fill="#4ac0f0">
<rect x="551.5" y="1045.5" width="10.8" height="10.8"/>
<rect x="563.3" y="1045.5" width="10.8" height="10.8"/>
<rect x="551.5" y="1057.3" width="10.8" height="10.8"/>
<rect x="563.3" y="1057.3" width="10.8" height="10.8"/>
</g>
<!-- search pill -->
<rect x="587.5" y="1040.5" width="219" height="31" rx="15.5" fill="#33333f" stroke="#474754" stroke-width="1"/>
<circle cx="605" cy="1055" r="5.3" fill="none" stroke="#c8c8d0" stroke-width="1.6"/>
<path d="M608.8 1058.8l4 4" stroke="#c8c8d0" stroke-width="1.8"/>
<text x="623.5" y="1060.5" font-family="Liberation Sans" font-size="13" fill="#d4d4dc">Search</text>
<!-- outlook -->
<rect x="833.5" y="1044" width="14.5" height="11" fill="#f0b070"/>
<path d="M834 1044.5l7 5.5l7-5.5" fill="none" stroke="#fff" stroke-width="1.3"/>
<rect x="825" y="1054" width="18" height="12" fill="#1a90d8"/>
<rect x="819" y="1049.5" width="13" height="13" fill="#0a64b8"/>
<circle cx="825.5" cy="1056" r="3.6" fill="none" stroke="#fff" stroke-width="1.6"/>
<!-- folder -->
<path d="M863 1045.5h8l2 2.5h14.5v18h-24.5z" fill="#f6c648"/>
<path d="M863 1045.5h8l2 2.5v2h-10z" fill="#e0a020"/>
<rect x="868.5" y="1060" width="14" height="6" fill="#1a78d0"/>
<!-- chrome -->
<circle cx="919" cy="1056" r="12" fill="#e8453c"/>
<path d="M919 1056l-10.4 6l-1.6-6a12 12 0 0 0 12 12z" fill="#34a853"/>
<path d="M907 1056a12 12 0 0 0 6 10.4l6-10.4z" fill="#34a853"/>
<path d="M919 1068a12 12 0 0 0 12-12h-12z" fill="#fbbc05"/>
<circle cx="919" cy="1056" r="5.5" fill="#fff"/>
<circle cx="919" cy="1056" r="4.3" fill="#4285f4"/>
<circle cx="928.5" cy="1047" r="7.3" fill="#11806a"/>
<text x="928.5" y="1050.8" font-family="Liberation Sans" font-size="9.5" fill="#e8f8f0" text-anchor="middle">R</text>
<!-- VS purple -->
<path d="M967 1044.5l8 3.5v16.5l-8 3.5l-11-9l-3.5 2.5l-1.5-1v-10l1.5-1l3.5 2.5zM967 1050.5l-6 5.5l6 5.5z" fill="#a070e0" fill-rule="evenodd"/>
<!-- VS code -->
<path d="M1012 1044.5l7 3.5v16.5l-7 3.5l-10-9l-4 3l-2-1v-10l2-1l4 3zM1012 1050.5l-6 5.5l6 5.5z" fill="#2a9ae8" fill-rule="evenodd"/>
<!-- spotify -->
<circle cx="1050.7" cy="1056" r="11.3" fill="#1ed760"/>
<path d="M1044 1052.5q7-2 14 1.5M1044.8 1056q6-1.6 12 1.2M1045.8 1059.3q5-1.2 9.5.9" fill="none" stroke="#11111f" stroke-width="1.6" stroke-linecap="round"/>
<!-- calculator -->
<rect x="1086" y="1045" width="18" height="22" rx="1" fill="#6a7a88"/>
<rect x="1088" y="1047" width="14" height="4" fill="#60c8f0"/>
<g fill="#d8e0e8"><rect x="1088" y="1053" width="3.5" height="3"/><rect x="1093.2" y="1053" width="3.5" height="3"/><rect x="1098.4" y="1053" width="3.5" height="3"/><rect x="1088" y="1057.5" width="3.5" height="3"/><rect x="1093.2" y="1057.5" width="3.5" height="3"/><rect x="1088" y="1062" width="3.5" height="3"/><rect x="1093.2" y="1062" width="3.5" height="3"/></g>
<rect x="1098.4" y="1057.5" width="3.5" height="7.5" fill="#2a6ab0"/>
<!-- orange app -->
<rect x="1127" y="1044.5" width="24" height="23" fill="#f09838"/>
<path d="M1132 1050h14v5h-14zM1133 1057h12v6h-12z" fill="none" stroke="#fde0b0" stroke-width="1.2"/>
<!-- teams -->
<circle cx="1181" cy="1046.5" r="3.5" fill="#7b83eb"/>
<rect x="1177" y="1051" width="22" height="16" rx="5" fill="#5b5fc7"/>
<rect x="1170.5" y="1054" width="11" height="11" rx="1.5" fill="#4b53bc"/>
<text x="1176" y="1063" font-family="Liberation Sans" font-size="9" font-weight="bold" fill="#fff" text-anchor="middle">T</text>
<path d="M1192 1036.5l7.5 13h-15z" fill="#e84a3a"/>
<path d="M1191.5 1041v4.5M1191.5 1046.8v1.4" stroke="#fff" stroke-width="1.3"/>
<!-- magnifier app -->
<circle cx="1227" cy="1055.5" r="11.3" fill="none" stroke="#f4f4f8" stroke-width="2"/>
<circle cx="1226" cy="1055" r="5" fill="#1a7af0"/>
<path d="M1229.5 1058.5l4 4" stroke="#f4f4f8" stroke-width="1.8"/>
<!-- C app -->
<path d="M1263 1047h17l-2.5 5h-11v8h11l2.5 5h-17l-4-4v-10z" fill="#d4d4d8"/>
<circle cx="1278.5" cy="1061" r="2.7" fill="#d01818"/>
<!-- obs -->
<circle cx="1314.4" cy="1055.5" r="11" fill="none" stroke="#c8c8cc" stroke-width="1.5"/>
<path d="M1310 1049q6-2 8 3M1320 1054q0 6-5 6.5M1313 1062q-6-1-5-7" fill="none" stroke="#c8c8cc" stroke-width="1.4"/>
<!-- active T app -->
<rect x="1339" y="1036.5" width="40.5" height="39" rx="4" fill="#5c3444"/>
<rect x="1346.5" y="1043.5" width="24.5" height="25" rx="2" fill="#6a7280"/>
<path d="M1353 1050h12M1359 1050v11" stroke="#f0f0f4" stroke-width="1.8"/>
<circle cx="1359" cy="1062" r="2" fill="#f0f0f4"/>
<rect x="1349" y="1073" width="20" height="2.5" rx="1" fill="#f088a0"/>
<!-- running dots -->
<g fill="#8a8a94"><ellipse cx="831" cy="1073.6" rx="2.6" ry="1.5"/><ellipse cx="875" cy="1073.6" rx="2.6" ry="1.5"/><ellipse cx="919" cy="1073.6" rx="2.6" ry="1.5"/><ellipse cx="1183" cy="1073.6" rx="2.6" ry="1.5"/><ellipse cx="1227" cy="1073.6" rx="2.6" ry="1.5"/><ellipse cx="1271" cy="1073.6" rx="2.6" ry="1.5"/><ellipse cx="1315" cy="1073.6" rx="2.6" ry="1.5"/></g>
<!-- tray -->
<path d="M1704.5 1058l5-5l5 5" fill="none" stroke="#e8e8ec" stroke-width="1.5"/>
<rect x="1738.2" y="1048.5" width="5.6" height="10" rx="2.8" fill="none" stroke="#8ad0c8" stroke-width="1.3"/>
<path d="M1736 1055.5a5 5 0 0 0 10 0M1741 1060.5v3" fill="none" stroke="#8ad0c8" stroke-width="1.3"/>
<path d="M1765.5 1051.5h11v9h-11zM1769 1063.5h5M1771.5 1060.5v3" fill="none" stroke="#e8e8ec" stroke-width="1.3"/>
<rect x="1777.5" y="1048.5" width="3" height="4.5" rx="1.2" fill="none" stroke="#e8e8ec" stroke-width="1"/>
<path d="M1779 1053v10" stroke="#e8e8ec" stroke-width="1.2"/>
<path d="M1789.5 1053h3l4-3.5v12l-4-3.5h-3z" fill="none" stroke="#e8e8ec" stroke-width="1.2"/>
<path d="M1799 1053l4.5 4.5M1803.5 1053l-4.5 4.5" stroke="#e8e8ec" stroke-width="1.2"/>
<rect x="1813.5" y="1051.5" width="13" height="8" rx="1" fill="none" stroke="#e8e8ec" stroke-width="1.3"/>
<rect x="1815.5" y="1053.5" width="9" height="4" fill="#e8e8ec"/>
<rect x="1827" y="1054" width="1.8" height="3" fill="#e8e8ec"/>
<path d="M1817 1047l-2.5 4h3l-2 3" fill="none" stroke="#e8e8ec" stroke-width="1"/>
<text x="1900" y="1052" font-family="Liberation Sans" font-size="12" fill="#f0f0f4" text-anchor="end">8:57 AM</text>
<text x="1900" y="1068" font-family="Liberation Sans" font-size="12" fill="#f0f0f4" text-anchor="end">2/10/2026</text>
<text x="50" y="1052" font-family="Liberation Sans" font-size="12" fill="#f0f0f4">1 inch of rain</text>
<text x="50" y="1068" font-family="Liberation Sans" font-size="12" fill="#c8c8d0">Saturday</text>
<!-- cursor -->
<path d="M1481 1065v14.5l3.2-3l2.6 3.5l2-1l-2.5-3.5h4.2z" fill="#fff" stroke="#111" stroke-width="0.8"/>
</svg>

</body></html>
